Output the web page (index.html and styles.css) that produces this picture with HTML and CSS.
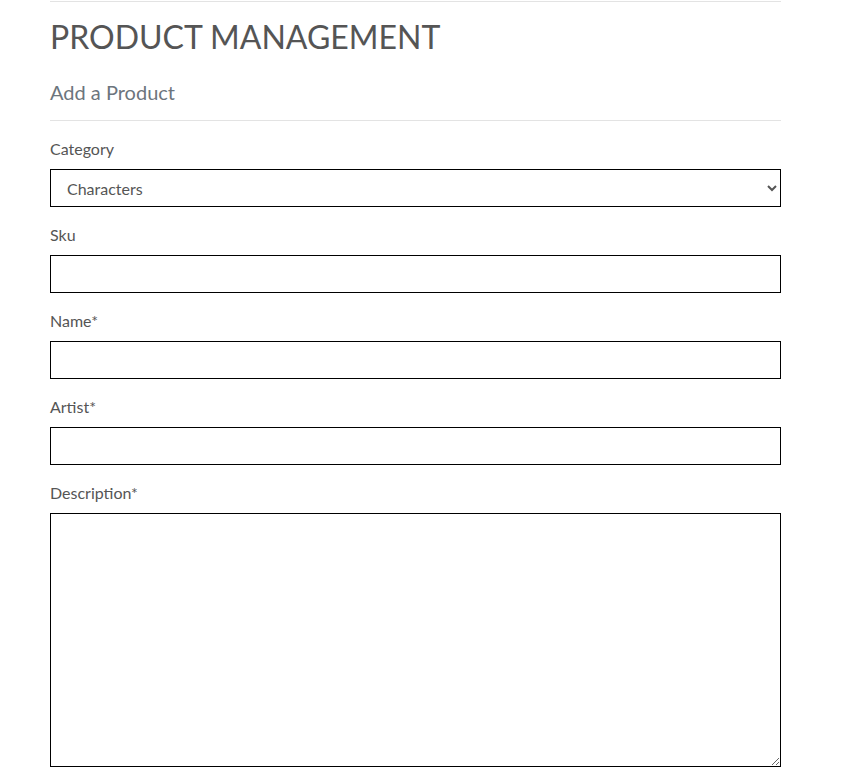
FILE: index.html
```html
<!DOCTYPE html>
<html>
<head>
<meta charset="utf-8">
<link rel="stylesheet" href="styles.css">
</head>
<body>
<div class="container">
  <hr class="rule">
  <h2 class="title">PRODUCT MANAGEMENT</h2>
  <h5 class="subtitle">Add a Product</h5>
  <hr class="rule">
  <form class="form">
    <div class="field">
      <label class="label">Category</label>
      <select class="control">
        <option>Characters</option>
      </select>
    </div>
    <div class="field">
      <label class="label">Sku</label>
      <input class="control" type="text">
    </div>
    <div class="field">
      <label class="label">Name*</label>
      <input class="control" type="text">
    </div>
    <div class="field">
      <label class="label">Artist*</label>
      <input class="control" type="text">
    </div>
    <div class="field">
      <label class="label">Description*</label>
      <textarea class="control area"></textarea>
    </div>
  </form>
</div>
</body>
</html>
```
FILE: styles.css
```css
html, body {
  margin: 0;
  padding: 0;
  background: #fff;
}
body {
  font-family: Lato, "Open Sans", sans-serif;
  color: #555;
}
.container {
  width: 731px;
  margin-left: 50px;
  padding-top: 1px;
}
.rule {
  border: 0;
  border-top: 1px solid #e3e3e3;
  margin: 0;
}
.title {
  font-weight: 400;
  font-size: 32px;
  line-height: 38px;
  margin: 16px 0 0 0;
  color: #555;
}
.subtitle {
  font-weight: 400;
  font-size: 20px;
  line-height: 24px;
  margin: 24px 0 16px 0;
  color: #6c757d;
}
.form {
  padding-top: 16px;
}
.field {
  display: flex;
  flex-direction: column;
  margin-bottom: 16px;
}
.label {
  font-size: 16px;
  line-height: 24px;
  margin-bottom: 8px;
  color: #555;
}
.control {
  box-sizing: border-box;
  height: 38px;
  border: 1px solid #000;
  border-radius: 0;
  background: #fff;
  font-family: Lato, sans-serif;
  font-size: 16px;
  color: #555;
  padding: 0 12px;
  margin: 0;
}
.area {
  height: 254px;
  resize: vertical;
}
```
